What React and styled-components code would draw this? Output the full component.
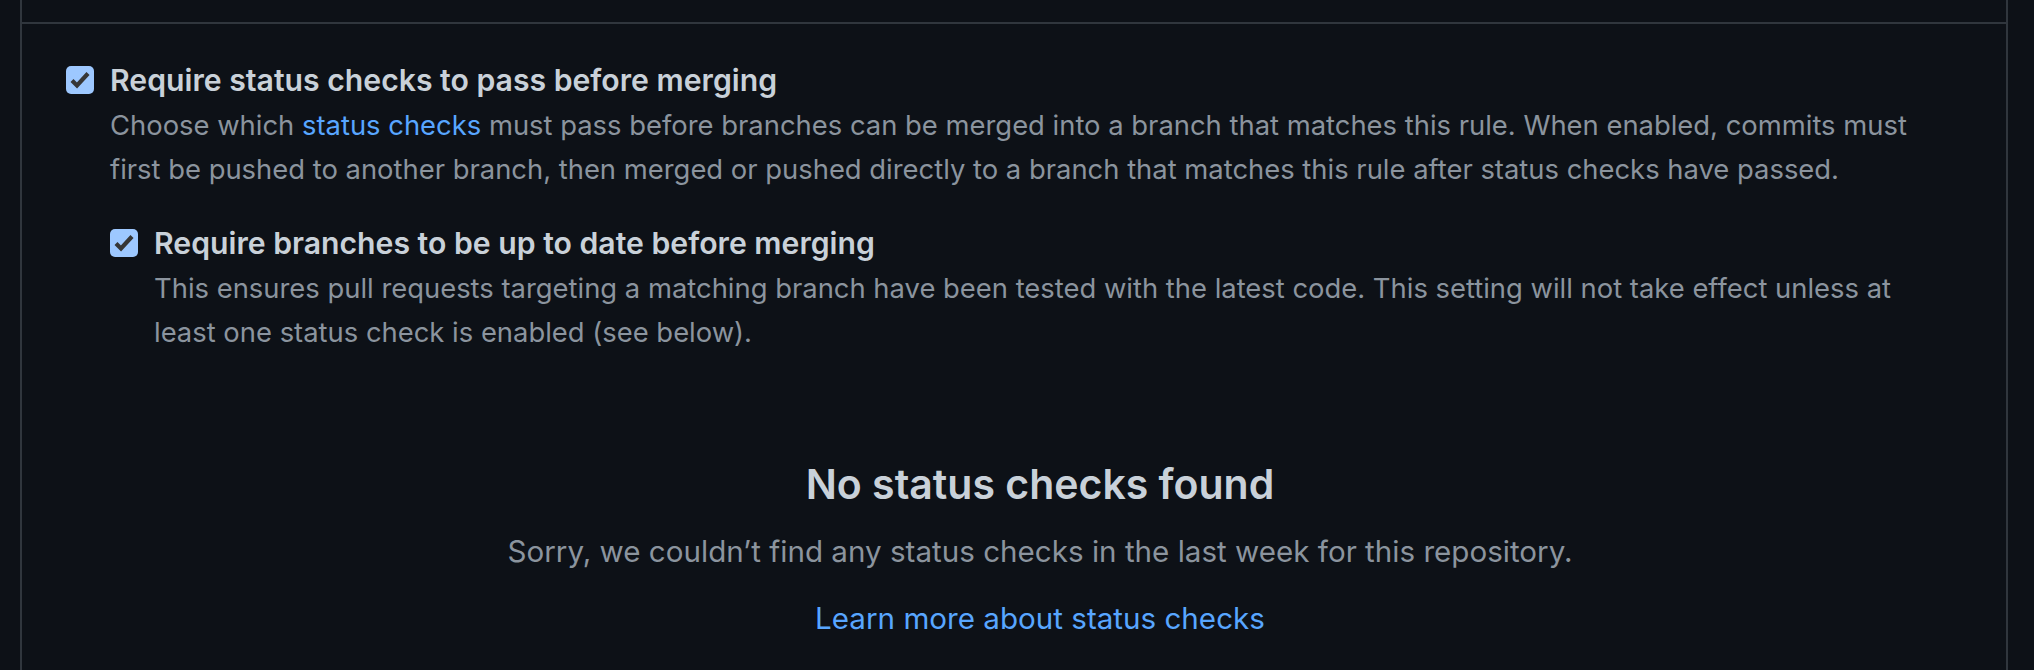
import React from "react";
import styled, { createGlobalStyle } from "styled-components";

const Global = createGlobalStyle`
  html, body { margin: 0; padding: 0; background: #0d1117; }
  body { font-family: Inter, "Noto Sans", "Liberation Sans", sans-serif; -webkit-font-smoothing: antialiased; }
`;

const Page = styled.div`
  padding: 0 26px 0 20px;
  background: #0d1117;
  min-height: 670px;
  box-sizing: border-box;
`;

const Box = styled.div`
  border-left: 2px solid #30363d;
  border-right: 2px solid #30363d;
  min-height: 670px;
`;

const PrevSection = styled.div`
  height: 22px;
  border-bottom: 2px solid #30363d;
`;

const Section = styled.div`
  padding: 35px 72px 0 44px;
`;

const Option = styled.div`
  display: flex;
  align-items: flex-start;
  gap: 16px;
  margin-top: ${(p) => p.$mt || 0}px;
`;

const Check = styled.svg`
  flex: none;
  width: 28px;
  height: 28px;
  margin-top: 7px;
`;

const Body = styled.div`
  flex: 1;
  min-width: 0;
`;

const Label = styled.div`
  font-size: 30.2px;
  font-weight: 600;
  line-height: 42px;
  color: #c9d1d9;
`;

const Note = styled.p`
  margin: 2px 0 0;
  font-size: 27.4px;
  line-height: 44px;
  color: #8b949e;
`;

const Link = styled.a`
  color: #58a6ff;
  text-decoration: none;
`;

const Blank = styled.div`
  display: flex;
  flex-direction: column;
  align-items: center;
  text-align: center;
  padding: 100px 0 0 36px;
`;

const BlankTitle = styled.h3`
  margin: 0;
  font-size: 41px;
  font-weight: 600;
  line-height: 60px;
  color: #c9d1d9;
`;

const BlankText = styled.p`
  margin: 15px 0 0;
  font-size: 29.6px;
  line-height: 45px;
  color: #8b949e;
`;

const BlankLink = styled.a`
  margin-top: 22px;
  font-size: 29.6px;
  line-height: 45px;
  color: #58a6ff;
  text-decoration: none;
`;

const Checkbox = () => (
  <Check viewBox="0 0 28 28" aria-hidden="true">
    <rect x="0" y="0" width="28" height="28" rx="5" fill="#9dc8ff" />
    <path d="M6 14.5 L11 19.5 L22 7.5" fill="none" stroke="#363636" strokeWidth="4.2" strokeLinecap="butt" strokeLinejoin="miter" />
  </Check>
);

export default function App() {
  return (
    <>
      <Global />
      <Page>
        <Box>
          <PrevSection />
          <Section>
            <Option>
              <Checkbox />
              <Body>
                <Label>Require status checks to pass before merging</Label>
                <Note>
                  Choose which <Link href="#">status checks</Link> must pass before branches can be merged into a branch that matches this rule. When enabled, commits must first be pushed to another branch, then merged or pushed directly to a branch that matches this rule after status checks have passed.
                </Note>
                <Option $mt={31}>
                  <Checkbox />
                  <Body>
                    <Label>Require branches to be up to date before merging</Label>
                    <Note>
                      This ensures pull requests targeting a matching branch have been tested with the latest code. This setting will not take effect unless at least one status check is enabled (see below).
                    </Note>
                  </Body>
                </Option>
                <Blank>
                  <BlankTitle>No status checks found</BlankTitle>
                  <BlankText>Sorry, we couldn’t find any status checks in the last week for this repository.</BlankText>
                  <BlankLink href="#">Learn more about status checks</BlankLink>
                </Blank>
              </Body>
            </Option>
          </Section>
        </Box>
      </Page>
    </>
  );
}
